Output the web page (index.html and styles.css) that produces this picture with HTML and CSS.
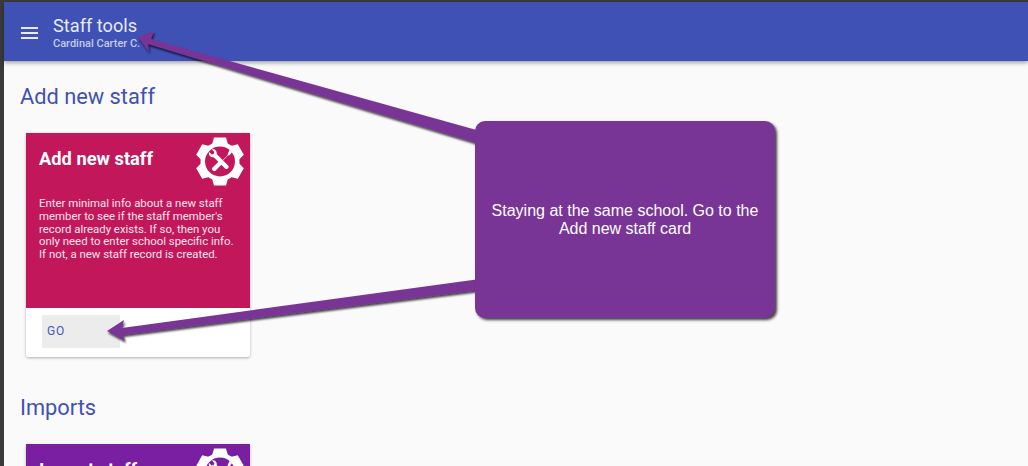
FILE: index.html
```html
<!DOCTYPE html>
<html lang="en">
<head>
    <meta charset="UTF-8">
    <meta name="viewport" content="width=device-width, initial-scale=1.0">
    <title>Staff tools</title>
    <link rel="stylesheet" href="styles.css">
</head>
<body>
    <svg class="icon-defs" width="0" height="0">
        <symbol id="tools-gear" viewBox="0 0 48 48">
            <g fill="#fff">
                <circle cx="24" cy="24" r="19.500"/>
                <polygon points="16,7 18,0 30,0 32,7"/>
                <polygon points="16,7 18,0 30,0 32,7" transform="rotate(60 24 24)"/>
                <polygon points="16,7 18,0 30,0 32,7" transform="rotate(120 24 24)"/>
                <polygon points="16,7 18,0 30,0 32,7" transform="rotate(180 24 24)"/>
                <polygon points="16,7 18,0 30,0 32,7" transform="rotate(240 24 24)"/>
                <polygon points="16,7 18,0 30,0 32,7" transform="rotate(300 24 24)"/>
            </g>
            <circle class="gear-hole" cx="24" cy="24" r="15"/>
            <g fill="#fff">
                <!-- wrench, jaw to the upper left -->
                <path d="M13 14.500l2.800 2.600 2-.5.5-2-2.600-2.800c2.800-.8 5.600 1.400 5 4.700l11.600 11.800c1.300 1.700-1.300 4.200-3 3L17.700 19.700c-3.300.6-5.500-2.400-4.700-5.200z"/>
                <!-- screwdriver, handle to the lower left -->
                <path d="M33.500 12.500l2.500 2.300-2.500 3-1.500.2-6.500 6.500 1.300 1.300-7.300 7.500c-1.500 1.300-4.500-1.300-3.200-3l7.500-7.300 1.300 1.300 6.500-6.500.2-1.500z"/>
            </g>
        </symbol>
    </svg>

    <div class="window">
        <header class="toolbar">
            <div class="menu-icon"><span></span><span></span><span></span></div>
            <div class="toolbar-titles">
                <div class="toolbar-title">Staff tools</div>
                <div class="toolbar-sub">Cardinal Carter C.</div>
            </div>
        </header>

        <main class="content">
            <h2 class="section-title">Add new staff</h2>
            <div class="card">
                <div class="card-top crimson">
                    <div class="card-head">
                        <h3>Add new staff</h3>
                        <svg class="gear"><use href="#tools-gear"/></svg>
                    </div>
                    <p>Enter minimal info about a new staff member to see if the staff member's record already exists. If so, then you only need to enter school specific info. If not, a new staff record is created.</p>
                </div>
                <div class="card-actions">
                    <button class="go-button">GO</button>
                </div>
            </div>

            <h2 class="section-title imports">Imports</h2>
            <div class="card">
                <div class="card-top violet">
                    <div class="card-head">
                        <h3>Import staff</h3>
                        <svg class="gear"><use href="#tools-gear"/></svg>
                    </div>
                </div>
            </div>
        </main>
    </div>

    <!-- annotation layer -->
    <svg class="arrows" width="1028" height="466" viewBox="0 0 1028 466">
        <defs>
            <filter id="arrow-shadow" x="-10%" y="-30%" width="120%" height="160%">
                <feDropShadow dx="1" dy="2" stdDeviation="1" flood-color="#000" flood-opacity=".75"/>
            </filter>
        </defs>
        <g class="arrow" filter="url(#arrow-shadow)">
            <polygon points="138,37 154,31 151,39 480,131 480,144 148,44 149,52"/>
            <polygon points="107,331 124,320 122,328 480,279 480,290 123,335 125,341"/>
        </g>
    </svg>

    <div class="callout">Staying at the same school. Go to the Add new staff card</div>
</body>
</html>
```

FILE: styles.css
```css
* {
    margin: 0;
    padding: 0;
    box-sizing: border-box;
}

html,
body {
    height: 100%;
    overflow: hidden;
}

body {
    font-family: Roboto, sans-serif;
    background: #fafafa;
}

.icon-defs {
    position: absolute;
}

.window {
    height: 100%;
    border-top: 2px solid #3a3a3a;
    border-left: 4px solid #3a3a3a;
    background: #fafafa;
}

.toolbar {
    height: 59px;
    background: #3f51b5;
    color: #fff;
    display: flex;
    align-items: center;
    padding-left: 17px;
    gap: 15px;
    box-shadow: 0 2px 4px rgba(0, 0, 0, 0.35);
}

.menu-icon {
    width: 17px;
    display: flex;
    flex-direction: column;
    gap: 3px;
    margin-top: 2px;
}

.menu-icon span {
    display: block;
    height: 2px;
    background: #e8eaf6;
}

.toolbar-titles {
    margin-top: 1px;
}

.toolbar-title {
    font-size: 18.2px;
    line-height: 22px;
    color: #e8eaf6;
}

.toolbar-sub {
    font-size: 11px;
    line-height: 13px;
    font-weight: 500;
    color: #c5cae9;
}

.content {
    padding: 22px 0 0 16px;
}

.section-title {
    font-size: 21.8px;
    line-height: 28px;
    font-weight: 400;
    color: #3f51b5;
}

.section-title.imports {
    margin-top: 37px;
}

.card {
    width: 224px;
    margin: 22px 0 0 6px;
    background: #fff;
    border-radius: 2px;
    box-shadow: 0 1px 3px rgba(0, 0, 0, 0.3);
}

.card-top {
    height: 175px;
    padding: 4px 6px 0 13px;
    color: #fff;
    background: var(--card-color);
}

.crimson {
    --card-color: #c2185b;
}

.violet {
    --card-color: #7b1fa2;
}

.card-head {
    display: flex;
    justify-content: space-between;
    align-items: flex-start;
}

.card-head h3 {
    margin-top: 12px;
    font-size: 18.3px;
    line-height: 20px;
    font-weight: 700;
}

.gear {
    width: 48px;
    height: 49px;
}

.gear-hole {
    fill: var(--card-color);
}

.card-top p {
    margin-top: 11px;
    width: 198px;
    font-size: 11.4px;
    line-height: 12.8px;
    font-weight: 400;
    color: #fbe4ed;
}

.card-actions {
    height: 49px;
    padding: 7px 0 0 16px;
}

.go-button {
    display: block;
    width: 78px;
    height: 33px;
    border: none;
    background: #ececec;
    color: #4558b8;
    font-family: Roboto, sans-serif;
    font-size: 12px;
    font-weight: 400;
    letter-spacing: 0.8px;
    text-align: left;
    padding: 0 0 2px 5px;
}

.arrows {
    position: absolute;
    top: 0;
    left: 0;
}

.arrow {
    fill: #783596;
}

.callout {
    position: absolute;
    left: 475px;
    top: 121px;
    width: 300px;
    height: 197px;
    padding: 0 15px;
    display: flex;
    align-items: center;
    text-align: center;
    background: #783596;
    border-radius: 10px;
    box-shadow: 2px 2px 3px rgba(0, 0, 0, 0.75);
    color: #fff;
    font-family: "Liberation Sans", Arial, sans-serif;
    font-size: 16px;
    line-height: 18px;
}
```
